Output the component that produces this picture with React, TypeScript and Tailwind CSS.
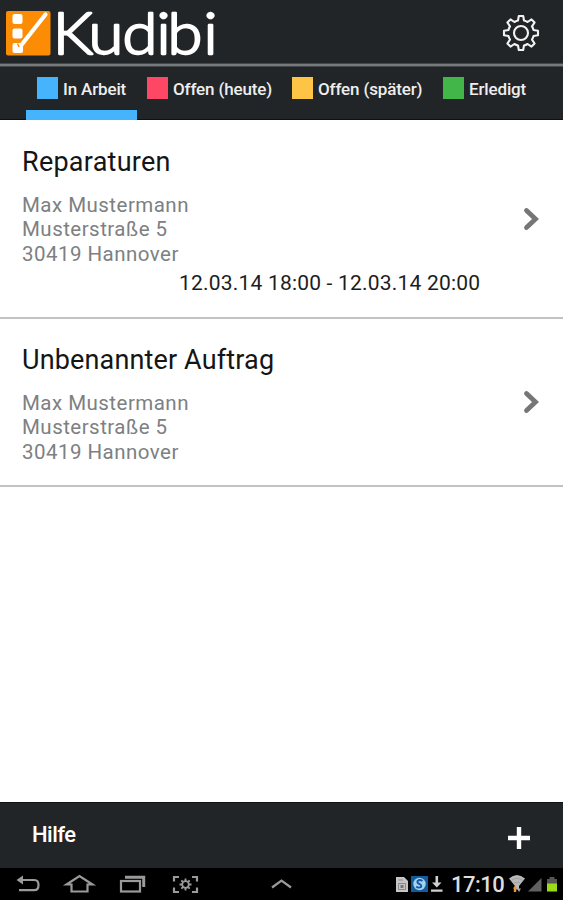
import React from 'react';

interface Tab {
    label: string;
    color: string;
    box: string;
}

interface Order {
    id: number;
    title: string;
    titleClass: string;
    time?: string;
    rowClass: string;
}

const TABS: Tab[] = [
    { label: 'In Arbeit', color: 'bg-[#45b4fc]', box: 'ml-[37px] w-[110px]' },
    { label: 'Offen (heute)', color: 'bg-[#fd4765]', box: 'w-[145px]' },
    { label: 'Offen (später)', color: 'bg-[#fdc446]', box: 'w-[151px]' },
    { label: 'Erledigt', color: 'bg-[#43b649]', box: 'w-[100px]' },
];

const ORDERS: Order[] = [
    {
        id: 1,
        title: 'Reparaturen',
        titleClass: 'mt-[26px] tracking-[0.25px]',
        time: '12.03.14 18:00 - 12.03.14 20:00',
        rowClass: 'h-[199px]',
    },
    { id: 2, title: 'Unbenannter Auftrag', titleClass: 'mt-[25px] tracking-[0.15px]', rowClass: 'h-[168px]' },
];

function Logo() {
    return (
        <svg className="overflow-visible" width="220" height="63" viewBox="0 0 220 63">
            <rect x="6" y="11" width="44.500" height="44.500" rx="2" fill="#fb8c04" />
            <g fill="#fff">
                <rect x="12.500" y="14" width="10" height="10" rx="2" />
                <rect x="12.500" y="28.500" width="10" height="10" rx="2" />
                <rect x="12.500" y="43" width="10.500" height="10" rx="2" />
            </g>
            <path d="M21 45.500L45.500 14.500" stroke="#fff" strokeWidth="4.200" strokeLinecap="round" />
            <path d="M17.500 43.500l1.500 3.500" stroke="#fb8c04" strokeWidth="1.500" fill="none" />
            <g transform="scale(1.1 1)">
                <text
                    x="48 80.5 111.3 142.3 152.2 185"
                    y="54"
                    fontFamily="Lato, sans-serif"
                    fontSize="57.5"
                    fontWeight="300"
                    fill="#fff"
                    stroke="#fff"
                    strokeWidth="2.300"
                    strokeLinejoin="round"
                >
                    Kudibi
                </text>
            </g>
        </svg>
    );
}

function GearIcon() {
    return (
        <svg width="38" height="38" viewBox="-19 -19 38 38" fill="none" stroke="#f2f2f2" strokeWidth="2.100" strokeLinejoin="round">
            <circle r="7" />
            <path d="M-3 -12.500L-2.200 -17H2.200L3 -12.500Q5 -12 6.600 -11L10.500 -13.600L13.600 -10.500L11 -6.600Q12 -5 12.500 -3L17 -2.200V2.200L12.500 3Q12 5 11 6.600L13.600 10.500L10.500 13.600L6.600 11Q5 12 3 12.500L2.200 17H-2.200L-3 12.500Q-5 12 -6.600 11L-10.500 13.600L-13.600 10.500L-11 6.600Q-12 5 -12.500 3L-17 2.200V-2.200L-12.500 -3Q-12 -5 -11 -6.600L-13.600 -10.500L-10.500 -13.600L-6.600 -11Q-5 -12 -3 -12.500Z" />
        </svg>
    );
}

function OrderRow({ order }: { order: Order }) {
    return (
        <div className={`flex border-b-2 border-[#c2c2c2] px-[22px] ${order.rowClass}`}>
            <div className="flex flex-1 flex-col">
                <div className={`h-[32px] text-[27px] leading-[32px] whitespace-nowrap text-[#151515] ${order.titleClass}`}>
                    {order.title}
                </div>
                <div className="mt-[14.5px] text-[20.5px] leading-[24.6px] tracking-[0.47px] text-[#7d8082]">
                    <div>Max Mustermann</div>
                    <div>Musterstraße 5</div>
                    <div>30419 Hannover</div>
                </div>
                {order.time && (
                    <div className="mt-[3.5px] ml-[157px] text-[21px] leading-[26px] tracking-[0.2px] whitespace-nowrap text-[#1d1d1d]">
                        {order.time}
                    </div>
                )}
            </div>
            <svg className={order.time ? 'mt-[87px]' : 'mt-[71px]'} width="20" height="24" viewBox="0 0 20 24" fill="none">
                <path d="M5.500 3.500L14.500 12L5.500 20.500" stroke="#767676" strokeWidth="4.800" strokeLinecap="round" />
            </svg>
        </div>
    );
}

/* Tablet navigation buttons and status area */
function SystemBar() {
    return (
        <div className="flex h-[32px] items-center bg-black">
            <svg width="320" height="32" viewBox="0 868 320 32" fill="none" stroke="#9a9a9a" strokeWidth="2.200">
                <path d="M21 880H34.500Q38.500 880 38.500 885Q38.500 890.200 34.500 890.200H19" />
                <path d="M23 875.500V884.500L16.500 880Z" fill="#9a9a9a" stroke="none" />
                <path d="M66.500 884.500H71.500V891.500H87.500V884.500H92.500L79.500 876Z" />
                <rect x="121" y="881" width="19" height="10.500" />
                <path d="M125 877.200H143.700V887" strokeWidth="3" />
                <path d="M179 877H174V881.500M192 877H197V881.500M179 892H174V887.500M192 892H197V887.500" />
                <circle cx="185.500" cy="884.500" r="3.300" strokeWidth="1.800" />
                <path d="M185.500 878.500V881M185.500 888V890.500M179.500 884.500H182M189 884.500H191.500M181.300 880.300L183 882M189.700 880.300L188 882M181.300 888.700L183 887M189.700 888.700L188 887" strokeWidth="1.800" />
                <path d="M272 887.500L281.500 880.500L291 887.500" />
            </svg>
            <svg className="ml-[72px]" width="56" height="32" viewBox="392 868 56 32">
                <path d="M396 877H404L408 881V892H396Z" fill="#c6c6c6" />
                <path d="M398.500 880H403M398.500 883.500H405.500V889.500H398.500Z" stroke="#888" fill="none" />
                <rect x="400.500" y="885" width="3" height="3" fill="#777" />
                <rect x="411" y="876" width="17" height="16" fill="#125b9c" />
                <circle cx="419.500" cy="884" r="6.200" fill="#a5d3ed" />
                <path d="M422.500 881Q419.500 879 417.500 881.200Q417 883 419.500 884Q422 885.300 421 887Q418.500 888.500 416.300 886.500" stroke="#1559a5" strokeWidth="1.900" fill="none" />
                <path d="M436.800 876V885" stroke="#d0d0d0" strokeWidth="2.600" />
                <path d="M432 882.500H441.500L436.800 887.500ZM431 889.500H442.500V891.800H431Z" fill="#d0d0d0" />
            </svg>
            <div className="mt-px ml-[3px] w-[56px] text-[22px] leading-[32px] font-medium tracking-[-0.5px] whitespace-nowrap text-[#dedede]">
                17:10
            </div>
            <svg width="56" height="32" viewBox="507 868 56 32">
                <path d="M509 878.500Q517 871.500 525 878.500L519 886V889.500H515V886Z" fill="#b8b8b8" />
                <path d="M511.500 880.300Q517 876.500 522.500 880.300M514 883Q517 881 520 883" stroke="#999" strokeWidth="0.800" fill="none" />
                <path d="M515 885.500L517 888.500H513Z" fill="#e59b35" />
                <rect x="513.800" y="888" width="2.400" height="4" fill="#e59b35" />
                <path d="M519 892L517 888.500H521Z" fill="#aaa" />
                <path d="M528 891.500L541.500 878V891.500Z" fill="#616161" />
                <path d="M549.500 877H554.500V879H557V884H547V879H549.500Z" fill="#555" />
                <rect x="547" y="883.500" width="10" height="8" fill="#9bdc18" />
            </svg>
        </div>
    );
}

export default function App() {
    return (
        <div className="flex h-[900px] w-[563px] flex-col overflow-hidden bg-white font-['Roboto',sans-serif]">
            {/* Header */}
            <div className="flex h-[63px] items-center justify-between bg-[#212528] pr-[23px]">
                <Logo />
                <div className="mt-[3px]">
                    <GearIcon />
                </div>
            </div>
            <div className="h-[4px] border-y border-[#44484b] bg-[#777a7d]" />

            {/* Tabs */}
            <div className="relative flex h-[53px] border-b border-[#111] bg-[#212528] pt-[10px]">
                {TABS.map((tab) => (
                    <div key={tab.label} className={`flex h-[22px] shrink-0 items-center gap-[5px] ${tab.box}`}>
                        <div className={`h-[22px] w-[21px] shrink-0 ${tab.color}`} />
                        <span className="mt-px text-[17px] leading-[22px] font-medium tracking-[-0.15px] whitespace-nowrap text-[#eee]">
                            {tab.label}
                        </span>
                    </div>
                ))}
                <div className="absolute bottom-[-1px] left-[26px] h-[10px] w-[111px] bg-[#45b4fc]" />
            </div>

            {/* Orders */}
            <div className="flex-1">
                {ORDERS.map((order) => (
                    <OrderRow key={order.id} order={order} />
                ))}
            </div>

            {/* Footer */}
            <div className="flex h-[66px] items-center justify-between border-t border-[#111] bg-[#212528] pr-[33px] pl-[32px]">
                <span className="-mt-px text-[22px] leading-[26px] font-medium tracking-[-0.5px] text-white">Hilfe</span>
                <svg className="mt-[4px]" width="22" height="22" viewBox="0 0 22 22">
                    <path d="M11 0V22M0 11H22" stroke="#fff" strokeWidth="4.400" />
                </svg>
            </div>
            <SystemBar />
        </div>
    );
}
